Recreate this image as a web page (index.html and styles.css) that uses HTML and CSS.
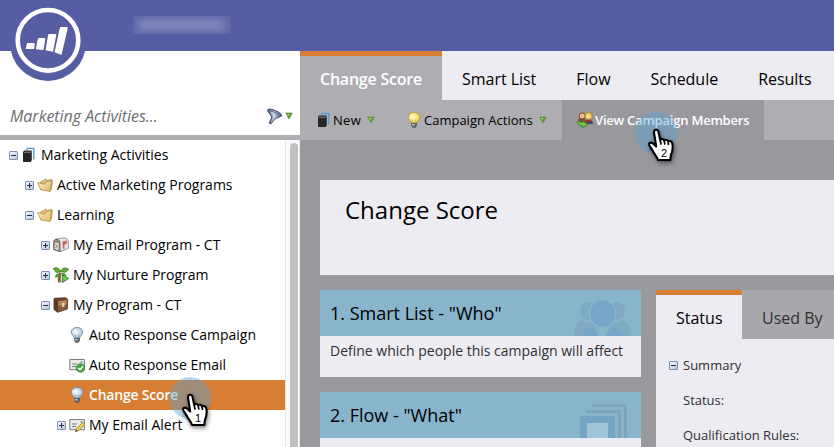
FILE: index.html
```html
<!DOCTYPE html>
<html lang="en">
<head>
<meta charset="utf-8">
<title>Change Score</title>
<link rel="stylesheet" href="styles.css">
</head>
<body>
<svg class="defs" width="0" height="0" aria-hidden="true">
  <defs>
    <linearGradient id="box" x1="0" y1="0" x2="1" y2="1"><stop offset="0" stop-color="#fff"/><stop offset="1" stop-color="#b4c2d6"/></linearGradient>
    <linearGradient id="gold" x1="0" y1="0" x2="1" y2="1"><stop offset="0" stop-color="#fff0bd"/><stop offset="1" stop-color="#dcb566"/></linearGradient>
    <radialGradient id="glass" cx=".4" cy=".4"><stop offset="0" stop-color="#fff"/><stop offset="1" stop-color="#b8cde0"/></radialGradient>
    <radialGradient id="lit" cx=".4" cy=".4"><stop offset="0" stop-color="#fffde0"/><stop offset="1" stop-color="#f5d952"/></radialGradient>
    <linearGradient id="steel"><stop offset="0" stop-color="#34476a"/><stop offset=".45" stop-color="#c3cfdf"/><stop offset="1" stop-color="#40547a"/></linearGradient>
    <symbol id="minus" viewBox="0 0 9 9"><rect x=".5" y=".5" width="8" height="8" rx=".6" fill="url(#box)" stroke="#7b90b0"/><path d="M2 4.5h5" stroke="#1d3152"/></symbol>
    <symbol id="plus" viewBox="0 0 9 9"><rect x=".5" y=".5" width="8" height="8" rx=".6" fill="url(#box)" stroke="#7b90b0"/><path d="M2 4.5h5M4.5 2v5" stroke="#1d3152"/></symbol>
    <symbol id="books" viewBox="0 0 16 16"><path d="M5.500 3 6.500 1.400h6.300v11" fill="none" stroke="#4f9dd3" stroke-width="1.400"/><path d="M2 5.300 3 3.500h7.800V13l-1 2H2.700a.7.7 0 0 1-.7-.7z" fill="#262626"/><path d="M3 5.300h6.500l.8-1.100" stroke="#aaa" stroke-width=".7" fill="none"/></symbol>
    <symbol id="folder" viewBox="0 0 16 16"><path d="M3.500 12.500V5l5.500-3 1 1.500 4.800-1 .7.900-1.300 9.400z" fill="#dfc074" stroke="#a98444" stroke-width=".7"/><path d="M.5 5.500 8 7.200l1.200-2.400 5.300-1-1.300 10.700-9.500-1.700z" fill="url(#gold)" stroke="#a98444" stroke-width=".7"/></symbol>
    <symbol id="mailbox" viewBox="0 0 16 16"><path d="M3 2.300 10 .8c3-.5 5.400 1.500 5.400 4v6.500L7 14.800z" fill="#dfe6ed" stroke="#7d8995" stroke-width=".8"/><path d="M.6 12.500V5.500C.6.800 6.700 1 7 6v8.800z" fill="#8f867c" stroke="#5b5a59" stroke-width=".8"/><path d="m1.800 5.800 3.900.5v7l-3.900-1.500z" fill="#ece9dd"/><path d="m2.500 7.200 2.500 4.300m0-4-2.500 3.300" stroke="#846a51" stroke-width=".7"/><path d="M9.500 4.500 13.800 3.500v3.300l-2.300.6v4.300h-1.500z" fill="#d45c51"/></symbol>
    <symbol id="sprout" viewBox="0 0 16 16"><path d="M7.500 5.800C6 8 6 11 6.500 15.300" fill="none" stroke="#826438" stroke-width="3"/><path d="M8 5C6.600.6 2.500-.1.200 1.800c1.500.3 1.300 3.200 3.500 3.500C5.500 5.500 7 4.200 8 5zM8 5c0-4.400 5-5 7.800-2.500-1.600.3-1.600 2.400-3.500 2.700C10.500 5.500 9.300 4.500 8 5z" fill="#67ad35" stroke="#347821" stroke-width=".8"/><path d="M7.500 7C5 5.300 1.800 7.300 2 10.800c2-.4 4.500-.9 5.500-3.800zM8 6.200c2.500-.5 5 .3 5.500 2.800l-3.500-.8z" fill="#499432"/><path d="m9.300 7.800 6.200 3.700-6.200 4z" fill="#77cb50" stroke="#287a28"/></symbol>
    <symbol id="case" viewBox="0 0 16 16"><path d="M1 1.300 12.500.8l2.200 1.500-.4 9.700-9.600 3.300L1 12.500z" fill="#6d432a" stroke="#4b2e20" stroke-width=".8"/><path d="m1.200 2 3.700 2.300v10.200l-3.700-2.200z" fill="#5a3827"/><path d="m5 4.300 9-1.600-.3 9-8.700 2.900z" fill="#8b5a3c"/><path d="m5 4.300 9-1.600-.3 4.400-4 1.900L5 8.500z" fill="#b58052"/><path d="m9 6 2.500-.4v4L9 10.200z" fill="#e6d2ae"/></symbol>
    <symbol id="bulbshape" viewBox="0 0 16 16"><path d="M5.500 11.500C5.500 9 2.300 8 2.300 5.200 2.300 2.400 4.800.5 8 .5s5.700 1.900 5.700 4.700c0 2.800-3.200 3.800-3.200 6.300z"/><path d="M6.300 7.500 7 11m2.800-3.500L9 11" stroke-width=".7"/><path d="M5.500 11.300h5v2L9.500 15.300h-3l-1-2z" fill="#626873" stroke="#4b505a" stroke-width=".7"/><path d="M5.600 12.800h3.200" stroke="#dfe3e8"/></symbol>
    <symbol id="check" viewBox="0 0 16 16"><path d="M.8 2.500h14.600v10.200H.8z" fill="#ececea" stroke="#7a7a76"/><path d="M3 7h5M3 9.500h4" stroke="#777"/><path d="M11.500 4h2v2h-2z" fill="#90a8a8"/><circle cx="11.500" cy="11" r="4.300" fill="#47a642" stroke="#347d31" stroke-width=".7"/><path d="m9.200 11 1.800 1.700 3-3.500" fill="none" stroke="#fff" stroke-width="1.500"/></symbol>
    <symbol id="edit" viewBox="0 0 16 16"><path d="M.8 2.500h14.600v10.200H.8z" fill="#ececea" stroke="#7a7a76"/><path d="M3 7h5M3 9.500h4" stroke="#777"/><path d="M11.500 4h2v2h-2z" fill="#90a8a8"/><path d="m6.500 14.800.8-3.300 6.700-6 2 2-6.700 6.200z" fill="#f2ce55" stroke="#856a24" stroke-width=".7"/><path d="m6.500 14.800.5-2 1.300 1.300z" fill="#222"/></symbol>
    <symbol id="people" viewBox="0 0 16 16"><path d="M1.300 9.500c-.4-3 .7-4 3.500-4s4.400 1.500 4 5z" fill="#85533b"/><circle cx="5.200" cy="4" r="3" fill="#eebc86" stroke="#674128" stroke-width=".8"/><path d="M8 12c-.5-3 .7-4.500 3.800-4.500 3 0 4.200 1.500 3.800 4.500z" fill="#a52f28"/><path d="M12 9.500h3.500v2.500H11z" fill="#324e87"/><path d="M8.500 6.500c-.7-4 .2-6 2.800-6 3 0 4.200 2.500 3.500 6.500z" fill="#f1cb49" stroke="#a57920" stroke-width=".7"/><circle cx="11.300" cy="4.800" r="2.100" fill="#f8d7a4"/><path d="M.7 9.300h1.800c.3 1.300 1.300 1.500 3 1.400v-2l5.300 3.700-5.300 3.300v-2C2 13.800.3 12.400.7 9.300z" fill="#76c944" stroke="#257728" stroke-width=".8"/></symbol>
    <symbol id="drop" viewBox="0 0 8 8"><path d="M.7 1h6.600L4 7z" fill="#5d9c2e" stroke="#5d8f3c" stroke-width=".7"/><path d="M2 2h2.500L3.500 4z" fill="#a4d879"/></symbol>
    <symbol id="funnel" viewBox="0 0 16 16"><path d="M1 1.500C4-.2 13.500 4 14.800 7.500c-.8 1.500-5.500 2.200-7.300 4L3.900 16 2 15 4.500 10C5 7-.8 3 1 1.500z" fill="url(#steel)" stroke="#27344e" stroke-width=".8"/><path d="M2 2.300c3 0 8 2.500 10.500 5.500" fill="none" stroke="#6d7d96" stroke-width="1.200"/><path d="M4 4.400c2 .8 3.500 2.400 3.800 4.700" fill="none" stroke="#fff" stroke-width=".8"/></symbol>
    <symbol id="hand" viewBox="0 0 28 34"><path d="M9.200 18.500 7 4.500C6.700 1.300 10.800.7 11.500 3.800l1.700 8c1-1.500 3.300-1 3.900.6 1.200-1.200 3.300-.7 3.900.9 1.600-.8 4 0 4.400 2.500.8 4.500-.1 8-1.400 11.200-.5 1.500-.6 3.500-.6 5H11c-1-3.500-4-6.300-5.500-9.500C4.200 19.800 1.300 17.500 2.200 15.500c1.500-2 4.300-.4 7 3z" fill="#fff" stroke="#000" stroke-width="2.100" stroke-linejoin="round"/><path d="m13.200 12 .9 4.700m3-4.300.8 4.300m3.100-3.400.6 3.700" stroke="#000" stroke-width="1.700"/></symbol>
  </defs>
</svg>

<header class="topbar">
  <svg class="logo" viewBox="0 0 76 76"><circle cx="38" cy="38" r="38" fill="#565da2"/><circle cx="38" cy="35.300" r="30.300" fill="none" stroke="#fff" stroke-width="4.600"/><g fill="#fff" transform="translate(-9.500 -5)"><path d="M27 43h6.300q1.200 0 1 1l-.8 5H25.200l1-5q.2-1 .8-1zM38.300 38h5.500q1.200 0 1 1L43 50l-7.700-.8L37.300 39q.2-1 1-1zM48.700 34h6.100q1.200 0 1 1l-3.300 16.800-7.500-1.500L47.600 35q.3-1 1.100-1zM60.500 27h5.700q1.300 0 1 1.200L61 55l-7-2.700L59.300 28q.3-1 1.200-1z"/></g></svg>
  <span class="account"><i></i></span>
</header>

<div class="layout">
  <aside class="sidebar">
    <div class="search"><span class="search-text">Marketing Activities...</span><svg class="i16"><use href="#funnel"/></svg><svg class="drop"><use href="#drop"/></svg></div>
    <div class="tree-wrap">
      <ul class="tree">
        <li class="row l0"><svg class="tog"><use href="#minus"/></svg><svg class="i16"><use href="#books"/></svg><span>Marketing Activities</span></li>
        <li class="row l1"><svg class="tog"><use href="#plus"/></svg><svg class="i16"><use href="#folder"/></svg><span>Active Marketing Programs</span></li>
        <li class="row l1"><svg class="tog"><use href="#minus"/></svg><svg class="i16"><use href="#folder"/></svg><span>Learning</span></li>
        <li class="row l2"><svg class="tog"><use href="#plus"/></svg><svg class="i16"><use href="#mailbox"/></svg><span>My Email Program - CT</span></li>
        <li class="row l2"><svg class="tog"><use href="#plus"/></svg><svg class="i16"><use href="#sprout"/></svg><span>My Nurture Program</span></li>
        <li class="row l2"><svg class="tog"><use href="#minus"/></svg><svg class="i16"><use href="#case"/></svg><span>My Program - CT</span></li>
        <li class="row l3"><span class="tog"></span><svg class="i16 off"><use href="#bulbshape"/></svg><span>Auto Response Campaign</span></li>
        <li class="row l3"><span class="tog"></span><svg class="i16"><use href="#check"/></svg><span>Auto Response Email</span></li>
        <li class="row l3 selected"><span class="tog"></span><svg class="i16 off"><use href="#bulbshape"/></svg><span>Change Score</span></li>
        <li class="row l3"><svg class="tog"><use href="#plus"/></svg><svg class="i16"><use href="#edit"/></svg><span>My Email Alert</span></li>
      </ul>
      <div class="scroll"><div class="thumb"></div></div>
    </div>
  </aside>

  <main class="main">
    <nav class="tabs">
      <a class="tab active">Change Score</a><a class="tab">Smart List</a><a class="tab">Flow</a><a class="tab">Schedule</a><a class="tab">Results</a>
    </nav>
    <div class="toolbar">
      <div class="tool new"><svg class="i16"><use href="#books"/></svg><span>New</span><svg class="drop"><use href="#drop"/></svg></div>
      <div class="tool actions"><svg class="i16 on"><use href="#bulbshape"/></svg><span>Campaign Actions</span><svg class="drop"><use href="#drop"/></svg></div>
      <div class="tool members"><svg class="i16"><use href="#people"/></svg><span>View Campaign Members</span></div>
    </div>
    <div class="content">
      <section class="title"><h1>Change Score</h1></section>
      <div class="columns">
        <div class="cards">
          <section class="card"><div class="card-head"><h2>1. Smart List - "Who"</h2>
            <svg class="art" viewBox="0 0 60 46"><g fill="#7faac1"><ellipse cx="17" cy="21" rx="8" ry="9"/><ellipse cx="46" cy="21" rx="8" ry="9"/><path d="M3 45c0-9 2-13 8-15 4 4 9 4 12 1l5 15H6zM59 45c0-9-2-13-8-15-4 4-8 4-11 1l-6 15h22z"/></g><ellipse cx="31.500" cy="23.500" rx="13" ry="14" fill="#75a5c8" stroke="#88b4cc" stroke-width="1.500"/><path d="M11 46c1-5 4-8 9-9l8 9zM34 46l8-9c5 1 8 4 11 9z" fill="#75a5c8"/></svg></div><p>Define which people this campaign will affect</p></section>
          <section class="card"><div class="card-head"><h2>2. Flow - "What"</h2>
            <svg class="art" viewBox="0 0 60 46"><path d="M21 13.500h33.500V46M15 19.500h33.500V46" fill="none" stroke="#7ea5b9" stroke-width="3"/><path d="M9 24h35v22H9z" fill="#75a5c5"/><path d="M16 31h21v15H16z" fill="#9fc3d7"/></svg></div><p></p></section>
        </div>
        <section class="details">
          <nav class="subtabs"><a class="subtab current">Status</a><a class="subtab">Used By</a></nav>
          <div class="info">
            <div class="line"><svg class="tog"><use href="#minus"/></svg><span>Summary</span></div>
            <div class="line field">Status:</div>
            <div class="line field">Qualification Rules:</div>
          </div>
        </section>
      </div>
    </div>
  </main>
</div>

<div class="pointer first"><svg viewBox="0 0 28 34"><use href="#hand"/></svg><span>1</span></div>
<div class="pointer second"><svg viewBox="0 0 28 34"><use href="#hand"/></svg><span>2</span></div>
</body>
</html>
```
FILE: styles.css
```css
* { box-sizing: border-box; }
body { margin: 0; width: 834px; height: 447px; overflow: hidden; position: relative; background: #99989d; color: #000; font: 14px/20px "Open Sans", sans-serif; }
h1, h2, p, ul { margin: 0; padding: 0; font-weight: 400; list-style: none; }
svg { display: block; flex: none; }
span, h1, h2, p, a { white-space: nowrap; }
.defs { position: absolute; }
.i16 { width: 16px; height: 16px; }
.tog { width: 9px; height: 9px; flex: none; }
.drop { width: 8px; height: 8px; }
.off { fill: url(#glass); stroke: #7f93a8; }
.on { fill: url(#lit); stroke: #bea33a; }

.topbar { height: 51px; background: #565da2; position: relative; }
.logo { position: absolute; left: 9.500px; top: 5px; width: 76px; height: 76px; z-index: 2; }
.account { position: absolute; left: 133px; top: 16px; width: 98px; height: 18px; background: #5f66a7; overflow: hidden; }
.account i { display: block; width: 86px; height: 10px; margin: 4px 5px; border-radius: 4px; background: #8a8ec0; filter: blur(4px); }

.layout { display: flex; height: 396px; overflow: hidden; }
.sidebar { width: 300px; flex: none; background: #fff; }
.search { height: 89px; padding: 41px 7px 0 10px; border-bottom: 5px solid #aeadb2; display: flex; align-items: flex-start; color: #6d6e70; font-size: 16px; font-style: italic; }
.search-text { flex: 1; line-height: 48px; letter-spacing: -.04px; }
.search .i16 { margin-top: 16px; }
.search .drop { margin: 20px 0 0 2px; }
.tree-wrap { display: flex; height: 307px; overflow: hidden; }
.tree { width: 285px; }
.row { height: 30px; display: flex; align-items: center; }
.row .i16 { margin: 0 4px 0 3px; }
.l0 { padding-left: 9px; }
.l1 { padding-left: 25px; }
.l2 { padding-left: 41px; }
.l3 { padding-left: 57px; }
.selected { background: #d77d34; color: #fff; font-weight: 600; letter-spacing: -.2px; }
.scroll { width: 15px; padding: 3px 3px 0 4px; background: #fafafa; border-left: 1px solid #e6e6e6; border-right: 1px solid #ececec; }
.thumb { width: 8px; height: 304px; border-radius: 4px 4px 0 0; background: #c1c1c1; }

.main { flex: 1; min-width: 0; }
.tabs { height: 49px; display: flex; background: #edecf2; font-size: 16px; }
.tab { padding: 18px 20px 0; letter-spacing: -.03px; }
.active { width: 142px; padding-top: 13px; border-top: 5px solid #d77d34; background: #aeadb2; color: #fff; font-weight: 600; letter-spacing: -.23px; }
.toolbar { display: flex; height: 40px; background: #aeadb2; font-size: 13px; }
.tool { display: flex; align-items: center; }
.new { width: 106px; padding-left: 16px; }
.new span { letter-spacing: .3px; margin-left: 1px; }
.actions { width: 156px; }
.members { width: 202px; padding-left: 15px; background: #99989d; color: #fff; font-weight: 600; letter-spacing: -.22px; }
.members .i16 { margin-right: 2px; }
.tool .drop { margin-left: 6px; }
.actions .i16 { margin-right: 2px; }

.content { padding: 40px 0 0 20px; }
.title { height: 95px; background: #edecf2; padding: 14px 25px; }
h1 { font-size: 24px; line-height: 32px; }
.columns { display: flex; gap: 15px; margin-top: 15px; }
.cards { width: 321px; flex: none; display: flex; flex-direction: column; gap: 15px; }
.card { height: 87px; background: #edecf2; }
.card-head { height: 46px; padding-left: 10px; background: #88b4cc; display: flex; align-items: center; justify-content: space-between; }
h2 { font-size: 18px; line-height: 24px; }
.art { width: 60px; height: 46px; margin-right: 10px; }
.card p { padding: 5px 10px; color: #303033; }
.details { flex: 1; min-width: 0; height: 180px; background: #edecf2; }
.subtabs { display: flex; height: 49px; font-size: 16px; background: #a9a8ac; color: #303033; }
.subtab { padding: 18px 20px 0; }
.current { width: 86px; padding-top: 13px; border-top: 5px solid #d77d34; background: #edecf2; color: #000; }
.info { padding: 9px 0 0 13px; font-size: 13px; color: #303033; }
.line { display: flex; align-items: center; gap: 5px; height: 35px; }
.line:first-child { height: 34px; }
.field { padding-left: 14px; }

.pointer { position: absolute; width: 42px; height: 42px; border-radius: 50%; background: rgba(84, 164, 216, .42); z-index: 5; }
.pointer svg { position: absolute; left: 12px; top: 16px; width: 28px; height: 34px; filter: drop-shadow(1px 2px 2px rgba(0, 0, 0, .5)); }
.pointer span { position: absolute; left: 24px; top: 34px; width: 10px; font: 11px/14px "Liberation Sans", sans-serif; text-align: center; }
.first { left: 169px; top: 377px; }
.second { left: 635px; top: 112px; }
```
